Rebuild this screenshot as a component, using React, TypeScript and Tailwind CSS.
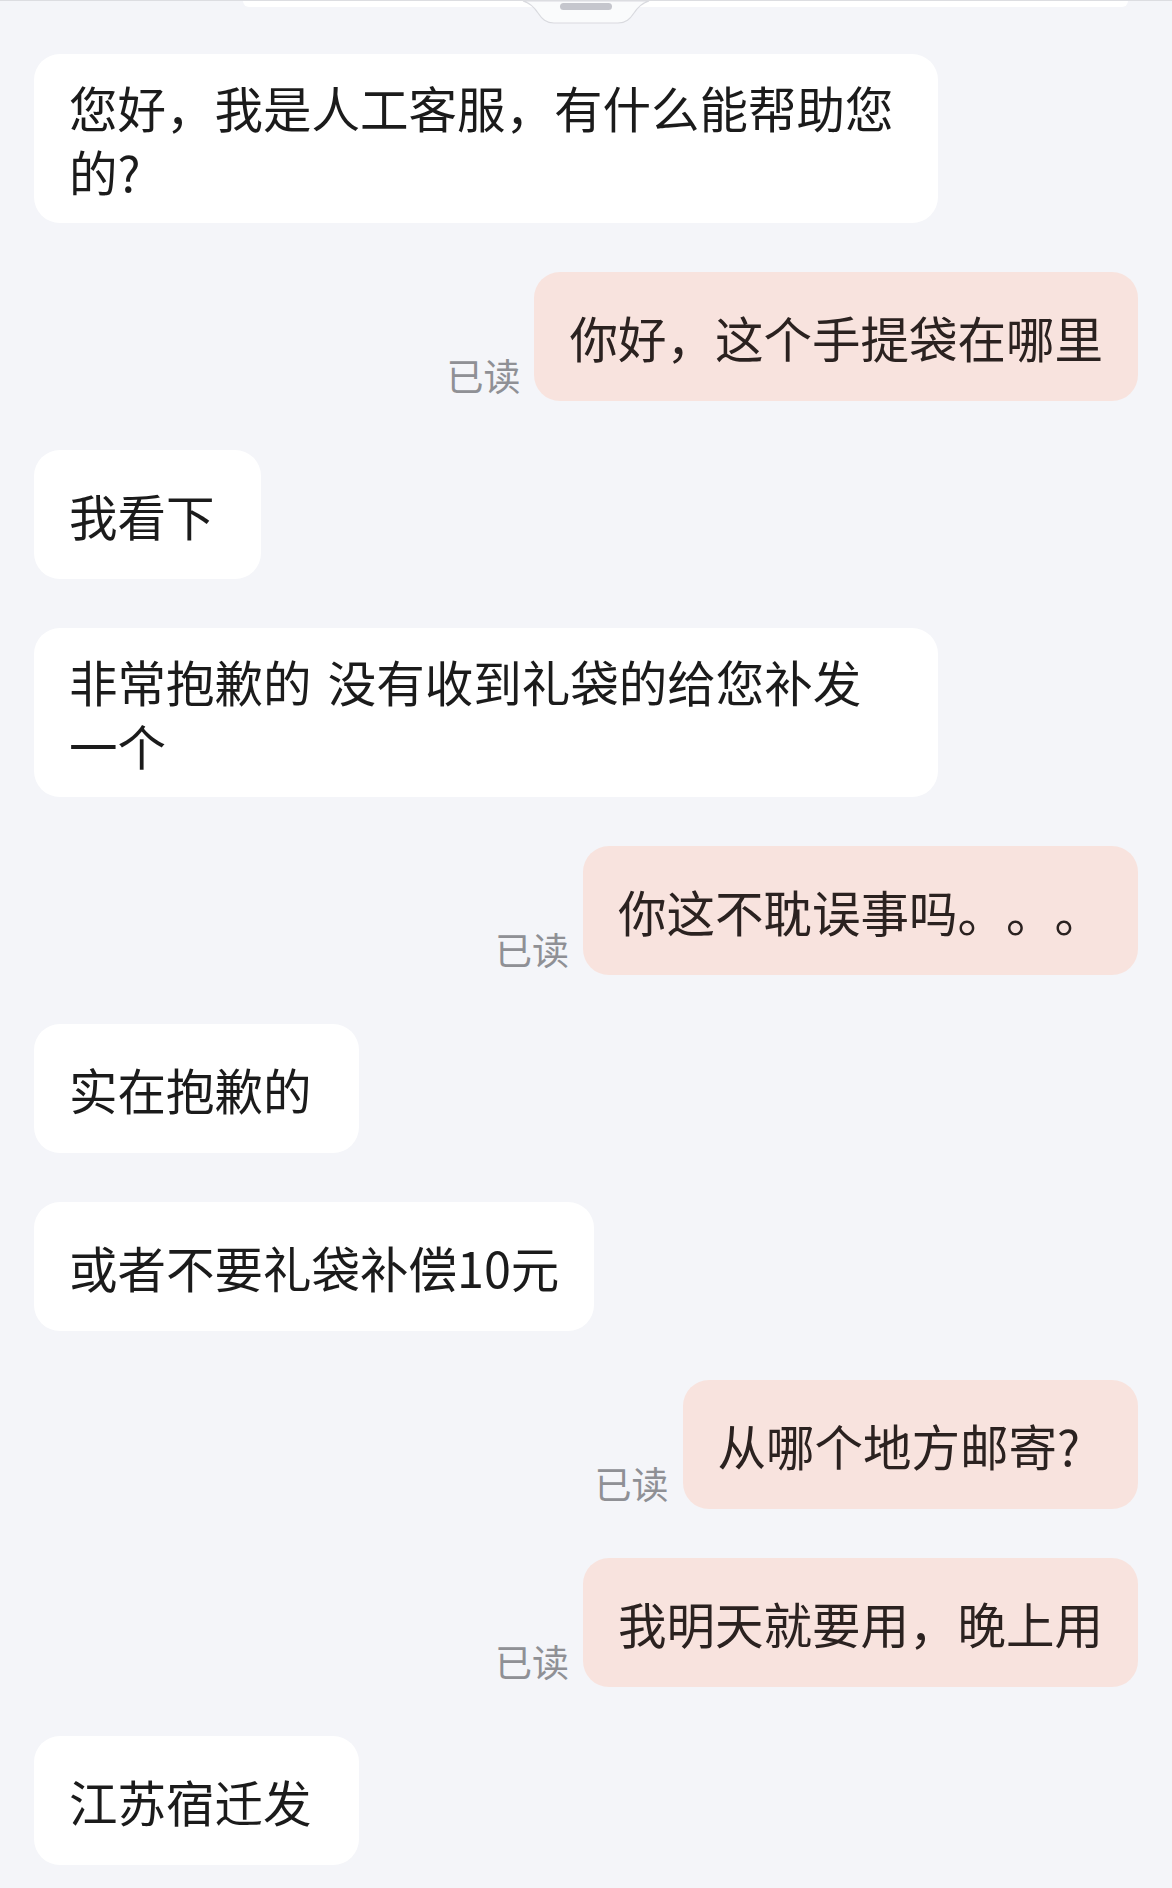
import React from "react";

type Msg = {
  side: "left" | "right";
  text: string;
  pr?: string;
};

const messages: Msg[] = [
  { side: "left", text: "您好，我是人工客服，有什么能帮助您的?" },
  { side: "right", text: "你好，这个手提袋在哪里" },
  { side: "left", text: "我看下", pr: "pr-[46px]" },
  { side: "left", text: "非常抱歉的\u2004没有收到礼袋的给您补发一个" },
  { side: "right", text: "你这不耽误事吗。。。" },
  { side: "left", text: "实在抱歉的", pr: "pr-[47px]" },
  { side: "left", text: "或者不要礼袋补偿10元" },
  { side: "right", text: "从哪个地方邮寄?", pr: "pr-[58px]" },
  { side: "right", text: "我明天就要用，晚上用" },
  { side: "left", text: "江苏宿迁发", pr: "pr-[47px]" },
];

const font = {
  fontFamily: '"Noto Sans CJK SC", "Noto Sans", sans-serif',
};

function LeftBubble({ m }: { m: Msg }) {
  return (
    <div
      className={`self-start max-w-[904px] min-h-[129px] flex items-center bg-white rounded-[26px] pl-[35px] ${
        m.pr ?? "pr-[35px]"
      } py-[20.5px] text-[48.5px] leading-[64px] text-[#1b1b1b] [text-spacing-trim:space-all]`}
    >
      <span>{m.text}</span>
    </div>
  );
}

function RightBubble({ m }: { m: Msg }) {
  return (
    <div className="self-end flex items-end gap-[14px]">
      <span className="mb-[7px] text-[37px] leading-[37px] text-[#8f9095]">已读</span>
      <div
        className={`min-h-[129px] flex items-center bg-[#f8e3de] rounded-[26px] pl-[35px] ${
          m.pr ?? "pr-[35px]"
        } py-[20.5px] text-[48.5px] leading-[64px] text-[#2b2220] [text-spacing-trim:space-all]`}
      >
        <span>{m.text}</span>
      </div>
    </div>
  );
}

export default function App() {
  return (
    <div className="w-full min-h-screen bg-[#f4f5f9] pb-[22px]" style={font}>
      <div className="relative h-[54px] border-t border-[#dcdde1]">
        <div className="ml-[243px] w-[885px] h-[6px] bg-white rounded-b-[10px]" />
        <svg
          className="absolute left-[522px] top-0"
          width="128"
          height="26"
          viewBox="0 0 128 26"
        >
          <path
            d="M1,0 C8,2 12,6 16,12 C20,18 24,22 32,22 L96,22 C104,22 108,18 112,12 C116,6 120,2 127,0 Z"
            fill="#fafbfc"
            stroke="#d9dadf"
            strokeWidth="1.2"
          />
          <rect x="38" y="2" width="52" height="7" rx="3.5" fill="#c5c6cd" />
        </svg>
      </div>
      <div className="flex flex-col gap-[49px] px-[34px]">
        {messages.map((m, i) =>
          m.side === "left" ? <LeftBubble key={i} m={m} /> : <RightBubble key={i} m={m} />
        )}
      </div>
    </div>
  );
}
